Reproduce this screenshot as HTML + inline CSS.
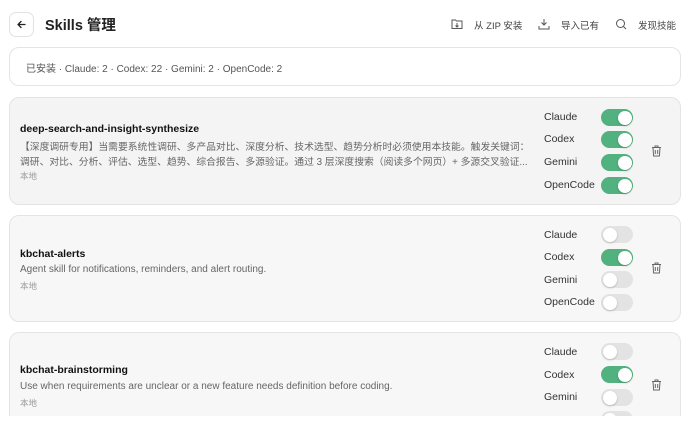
<!DOCTYPE html>
<html><head><meta charset="utf-8"><style>
*{margin:0;padding:0;box-sizing:border-box}
html,body{width:690px;height:428px;overflow:hidden}
body{background:#fff;font-family:"Liberation Sans","Noto Sans CJK SC",sans-serif;color:#222;position:relative}
.a{position:absolute;white-space:nowrap}
.card{position:absolute;left:9px;width:672px;border:1px solid #e4e4e4;border-radius:10px}
.tg{position:absolute;width:32px;height:17px;border-radius:9px;background:#e3e3e3}
.tg::after{content:"";position:absolute;top:1.5px;left:1.5px;width:14px;height:14px;border-radius:50%;background:#fff;box-shadow:0 1px 2px rgba(0,0,0,.2)}
.tg.on{background:#52b27f}
.tg.on::after{left:16.5px}
.lb{position:absolute;font-size:10.5px;color:#333}
.tt{font-size:10.5px;font-weight:bold;color:#111}
.ds{font-size:10px;color:#666}
.sm{font-size:8.5px;color:#999}
</style></head><body>
<div class="a" style="left:9px;top:12px;width:25px;height:25px;border:1px solid #e2e2e2;border-radius:7px"></div>
<svg class="a" style="left:15px;top:18px" width="13" height="13" viewBox="0 0 13 13"><path d="M10 6.5H3M6 3.5L3 6.5L6 9.5" stroke="#222" stroke-width="1.3" fill="none" stroke-linecap="round"/></svg>
<div class="a" style="left:45px;top:14px;font-size:14.5px;font-weight:bold">Skills 管理</div>
<svg class="a" style="left:451px;top:18px" width="12" height="12" viewBox="0 0 12 12"><path d="M1 2h3.5l1 1H11v7.5H1z M6 5v4M4.5 7.5L6 9L7.5 7.5" stroke="#555" stroke-width="1" fill="none"/></svg>
<div class="a" style="left:474px;top:18px;font-size:9.5px;color:#444">从 ZIP 安装</div>
<svg class="a" style="left:538px;top:18px" width="12" height="12" viewBox="0 0 12 12"><path d="M6 1v6M3.5 4.5L6 7L8.5 4.5M1 8v3h10V8" stroke="#555" stroke-width="1" fill="none"/></svg>
<div class="a" style="left:561px;top:18px;font-size:9.5px;color:#444">导入已有</div>
<svg class="a" style="left:615px;top:18px" width="12" height="12" viewBox="0 0 12 12"><circle cx="5.5" cy="5.5" r="4" stroke="#555" stroke-width="1" fill="none"/><path d="M8.5 8.5L11 11" stroke="#555" stroke-width="1"/></svg>
<div class="a" style="left:638px;top:18px;font-size:9.5px;color:#444">发现技能</div>

<div class="card" style="top:47px;height:39px;background:#fff"></div>
<div class="a" style="left:26px;top:60px;font-size:10px;color:#555">已安装 · Claude: 2 · Codex: 22 · Gemini: 2 · OpenCode: 2</div>

<div class="card" style="top:97px;height:108px;background:#f4f4f4"></div>
<div class="a tt" style="left:20px;top:123px">deep-search-and-insight-synthesize</div>
<div class="a ds" style="left:20px;top:139px;font-size:9.8px">【深度调研专用】当需要系统性调研、多产品对比、深度分析、技术选型、趋势分析时必须使用本技能。触发关键词：</div>
<div class="a ds" style="left:20px;top:154px;font-size:9.8px">调研、对比、分析、评估、选型、趋势、综合报告、多源验证。通过 3 层深度搜索（阅读多个网页）+ 多源交叉验证...</div>
<div class="a sm" style="left:20px;top:170px">本地</div>

<div class="card" style="top:215px;height:107px;background:#f7f7f7"></div>
<div class="a tt" style="left:20px;top:248px">kbchat-alerts</div>
<div class="a ds" style="left:20px;top:264px">Agent skill for notifications, reminders, and alert routing.</div>
<div class="a sm" style="left:20px;top:280px">本地</div>

<div class="card" style="top:332px;height:84px;background:#f7f7f7;border-bottom:none;border-radius:10px 10px 0 0"></div>
<div class="a tt" style="left:20px;top:364px">kbchat-brainstorming</div>
<div class="a ds" style="left:20px;top:381px">Use when requirements are unclear or a new feature needs definition before coding.</div>
<div class="a sm" style="left:20px;top:397px">本地</div>

<div class="lb" style="left:544px;top:111px">Claude</div><div class="tg on" style="left:601px;top:109px"></div>
<div class="lb" style="left:544px;top:133px">Codex</div><div class="tg on" style="left:601px;top:131px"></div>
<div class="lb" style="left:544px;top:156px">Gemini</div><div class="tg on" style="left:601px;top:154px"></div>
<div class="lb" style="left:544px;top:179px">OpenCode</div><div class="tg on" style="left:601px;top:177px"></div>

<div class="lb" style="left:544px;top:229px">Claude</div><div class="tg" style="left:601px;top:226px"></div>
<div class="lb" style="left:544px;top:251px">Codex</div><div class="tg on" style="left:601px;top:249px"></div>
<div class="lb" style="left:544px;top:274px">Gemini</div><div class="tg" style="left:601px;top:271px"></div>
<div class="lb" style="left:544px;top:296px">OpenCode</div><div class="tg" style="left:601px;top:294px"></div>

<div class="lb" style="left:544px;top:346px">Claude</div><div class="tg" style="left:601px;top:343px"></div>
<div class="lb" style="left:544px;top:369px">Codex</div><div class="tg on" style="left:601px;top:366px"></div>
<div class="lb" style="left:544px;top:391px">Gemini</div><div class="tg" style="left:601px;top:389px"></div>
<div class="tg" style="left:601px;top:411px"></div>

<svg class="a" style="left:651px;top:145px" width="11" height="12" viewBox="0 0 11 12"><path d="M1 2.5h9M4 2.5V1h3v1.5M2 2.5l.6 8.5h5.8L9 2.5M4.3 5v4M6.7 5v4" stroke="#666" stroke-width="1" fill="none"/></svg>
<svg class="a" style="left:651px;top:262px" width="11" height="12" viewBox="0 0 11 12"><path d="M1 2.5h9M4 2.5V1h3v1.5M2 2.5l.6 8.5h5.8L9 2.5M4.3 5v4M6.7 5v4" stroke="#666" stroke-width="1" fill="none"/></svg>
<svg class="a" style="left:651px;top:379px" width="11" height="12" viewBox="0 0 11 12"><path d="M1 2.5h9M4 2.5V1h3v1.5M2 2.5l.6 8.5h5.8L9 2.5M4.3 5v4M6.7 5v4" stroke="#666" stroke-width="1" fill="none"/></svg>
<div class="a" style="left:0;top:416px;width:690px;height:12px;background:#fff;z-index:5"></div>
</body></html>
